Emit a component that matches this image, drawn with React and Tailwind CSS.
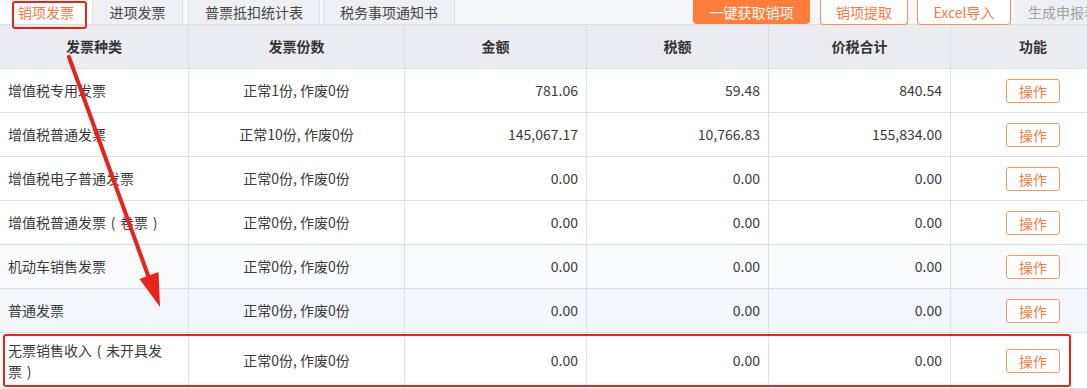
import React from "react";

const P = ({ c }) => <span className="inline-block w-[14px] text-center">{c}</span>;

const rows = [
  { name: "增值税专用发票", count: "正常1份, 作废0份", amt: "781.06", tax: "59.48", total: "840.54", bg: "bg-white" },
  { name: "增值税普通发票", count: "正常10份, 作废0份", amt: "145,067.17", tax: "10,766.83", total: "155,834.00", bg: "bg-white" },
  { name: "增值税电子普通发票", count: "正常0份, 作废0份", amt: "0.00", tax: "0.00", total: "0.00", bg: "bg-white" },
  {
    name: (
      <>
        增值税普通发票<P c="(" />卷票<P c=")" />
      </>
    ),
    count: "正常0份, 作废0份", amt: "0.00", tax: "0.00", total: "0.00", bg: "bg-white",
  },
  { name: "机动车销售发票", count: "正常0份, 作废0份", amt: "0.00", tax: "0.00", total: "0.00", bg: "bg-[#fafbfd]" },
  { name: "普通发票", count: "正常0份, 作废0份", amt: "0.00", tax: "0.00", total: "0.00", bg: "bg-[#f3f7fc]" },
];

const grid = "grid grid-cols-[189px_216px_182px_182px_182px_165px]";
const cell = "border-r border-b border-[#dcdfe3] flex items-center";

function OpBtn() {
  return (
    <div className="w-[54px] h-[24px] rounded-[3px] border border-[#ef9a6c] text-[#ef7d45] text-[14px] leading-[22px] flex items-center justify-center bg-white">
      操作
    </div>
  );
}

export default function App() {
  return (
    <div
      className="relative w-[1087px] h-[389px] overflow-hidden bg-white text-[#333]"
      style={{ fontFamily: '"Noto Sans CJK SC", "Noto Sans", sans-serif' }}
    >
      {/* Top bar */}
      <div className="flex h-[25px] bg-[#f6f7f9] border-b border-[#dcdfe3] text-[14px] leading-[24px]">
        <div className="w-[92px] bg-white text-[#ef7a47] flex items-center justify-center">销项发票</div>
        <div className="w-[91px] bg-[#eef0f3] border-l border-r border-[#dfe2e6] text-[#444] flex items-center justify-center">进项发票</div>
        <div className="w-[5px]" />
        <div className="w-[132px] bg-[#eef0f3] border-l border-r border-[#dfe2e6] text-[#444] flex items-center justify-center">普票抵扣统计表</div>
        <div className="w-[3px]" />
        <div className="w-[132px] bg-[#eef0f3] border-l border-r border-[#dfe2e6] text-[#444] flex items-center justify-center">税务事项通知书</div>
        <div className="flex-1" />
        <div className="w-[117px] h-[24px] bg-[#ff7e3b] text-white rounded-b-[4px] flex items-center justify-center">一键获取销项</div>
        <div className="w-[10px]" />
        <div className="w-[88px] h-[25px] bg-white border border-t-0 border-[#f09060] text-[#ef7d48] rounded-b-[4px] flex items-center justify-center">销项提取</div>
        <div className="w-[9px]" />
        <div className="w-[94px] h-[25px] bg-white border border-t-0 border-[#f09060] text-[#ef7d48] rounded-b-[4px] flex items-center justify-center">Excel导入</div>
        <div className="w-[4px]" />
        <div className="w-[72px] shrink-0 bg-[#eef0f3] text-[#a0a0a0] pl-[13px] whitespace-nowrap overflow-hidden">生成申报表</div>
      </div>

      {/* Table */}
      <div className="w-[1116px] text-[14px]">
        <div className={`${grid} h-[44px] bg-[#ebedf1] font-bold text-[#333]`}>
          <div className={`${cell} justify-center`}>发票种类</div>
          <div className={`${cell} justify-center`}>发票份数</div>
          <div className={`${cell} justify-center`}>金额</div>
          <div className={`${cell} justify-center`}>税额</div>
          <div className={`${cell} justify-center`}>价税合计</div>
          <div className={`${cell} justify-center`}>功能</div>
        </div>
        {rows.map((r, i) => (
          <div key={i} className={`${grid} h-[44px] ${r.bg} text-[#3a3a3a]`}>
            <div className={`${cell} pl-[8px]`}><span>{r.name}</span></div>
            <div className={`${cell} justify-center`}>{r.count}</div>
            <div className={`${cell} justify-end pr-[8px]`}>{r.amt}</div>
            <div className={`${cell} justify-end pr-[8px]`}>{r.tax}</div>
            <div className={`${cell} justify-end pr-[8px]`}>{r.total}</div>
            <div className={`${cell} justify-center`}><OpBtn /></div>
          </div>
        ))}
        <div className={`${grid} h-[56px] bg-white text-[#3a3a3a]`}>
          <div className={`${cell} pl-[8px] pr-[10px] leading-[21px]`}>
            <span>
              无票销售收入<P c="(" />未开具发<span className="whitespace-nowrap">票<P c=")" /></span>
            </span>
          </div>
          <div className={`${cell} justify-center`}>正常0份, 作废0份</div>
          <div className={`${cell} justify-end pr-[8px]`}>0.00</div>
          <div className={`${cell} justify-end pr-[8px]`}>0.00</div>
          <div className={`${cell} justify-end pr-[8px]`}>0.00</div>
          <div className={`${cell} justify-center`}><OpBtn /></div>
        </div>
      </div>

      {/* Annotations */}
      <div className="absolute left-[12px] top-[1px] w-[75px] h-[28px] border-[2.5px] border-[#e8231c] rounded-[3px]" />
      <div className="absolute left-[3px] top-[334px] w-[1068px] h-[53px] border-[2.5px] border-[#e8231c] rounded-[3px]" />
      <svg className="absolute left-0 top-0" width="1087" height="389" viewBox="0 0 1087 389">
        <line x1="69" y1="57" x2="149" y2="278" stroke="#e8231c" strokeWidth="4" strokeLinecap="round" />
        <polygon points="160,307 158.5,272 139.5,279" fill="#e8231c" />
      </svg>
    </div>
  );
}
